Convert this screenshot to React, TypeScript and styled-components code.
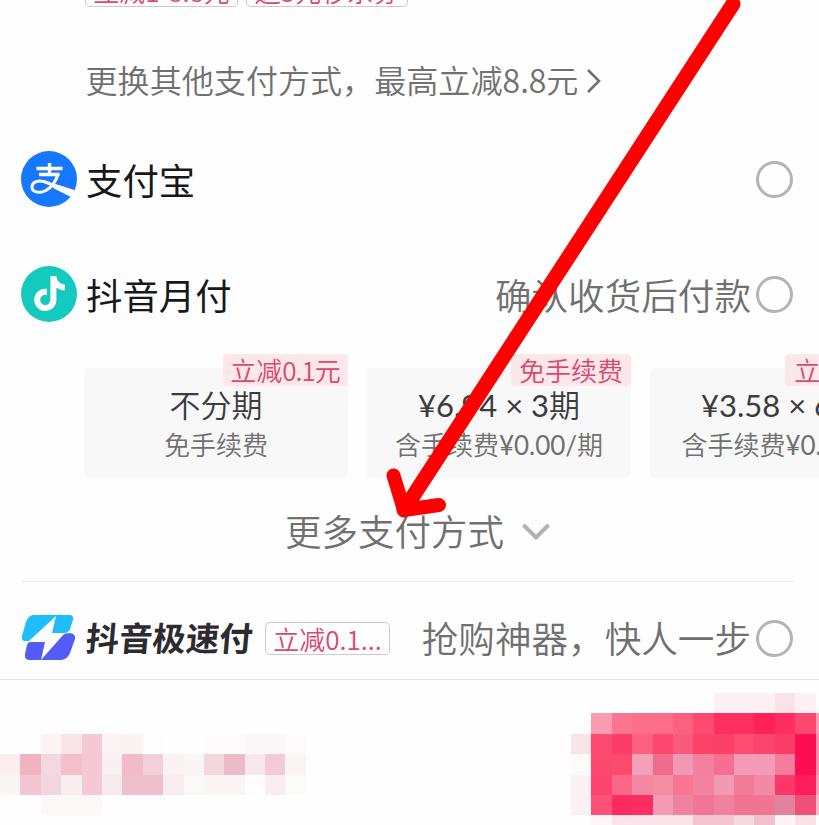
import React from 'react';
import styled, { createGlobalStyle } from 'styled-components';
import { FaTiktok } from 'react-icons/fa6';

const GlobalStyle = createGlobalStyle`
  * { box-sizing: border-box; }
  html, body { margin: 0; padding: 0; overflow: hidden; background: #fefefe; }
`;

const Screen = styled.main`
  position: relative;
  display: flex;
  flex-direction: column;
  width: 819px;
  height: 825px;
  overflow: hidden;
  background: #fefefe;
  color: #17181c;
  font-family: 'Noto Sans CJK SC', sans-serif;
  font-weight: 350;
  white-space: nowrap;
`;

const CouponStrip = styled.div`
  display: flex;
  align-items: flex-end;
  gap: 8px;
  height: 7px;
  padding-left: 85px;
`;

const Tag = styled.span<{ $width: number }>`
  flex: none;
  display: flex;
  align-items: center;
  justify-content: center;
  width: ${(p) => p.$width}px;
  height: 33px;
  border: 1px solid #d8c4c9;
  border-radius: 5px;
  color: #d9486f;
  font-size: 26px;
  line-height: 31px;
`;

const SwitchMethod = styled.div`
  display: flex;
  align-items: center;
  gap: 8px;
  height: 115px;
  padding: 32px 0 0 85.5px;
  color: #707070;
  font-size: 32.1px;
`;

const SwitchLabel = styled.span`
  margin-top: -4px;
  line-height: 48px;
`;

const MethodRow = styled.div<{ $height: number; $top?: number }>`
  display: flex;
  align-items: center;
  height: ${(p) => p.$height}px;
  padding: ${(p) => p.$top ?? 0}px 26px 0 21px;
`;

const Name = styled.span`
  margin: -2px 0 0 9px;
  font-size: 36.4px;
  font-weight: 400;
  line-height: 54px;
`;

const FastName = styled.span`
  margin: -2px 0 0 10px;
  color: #2b2b30;
  font-size: 33.4px;
  font-weight: 700;
  line-height: 50px;
  transform: skewX(-5deg);
`;

const Hint = styled.span`
  margin-left: auto;
  color: #707070;
  font-size: 36.6px;
  line-height: 54px;
`;

const Radio = styled.span<{ $push?: boolean }>`
  flex: none;
  width: 37px;
  height: 37px;
  margin-left: ${(p) => (p.$push ? 'auto' : '5px')};
  border: 3px solid #b4b4b4;
  border-radius: 50%;
`;

const Disc = styled.span<{ $color: string }>`
  flex: none;
  display: flex;
  align-items: center;
  justify-content: center;
  width: 56px;
  height: 56px;
  margin-top: -2px;
  border-radius: 50%;
  background: ${(p) => p.$color};
  color: #fff;
`;

const Plans = styled.div`
  display: flex;
  gap: 19px;
  height: 126px;
  padding: 16px 0 0 84px;
`;

const Plan = styled.div`
  position: relative;
  flex: none;
  display: flex;
  flex-direction: column;
  align-items: center;
  width: 264px;
  height: 110px;
  padding-top: 15px;
  border-radius: 5px;
  background: #f8f8f8;
`;

const PlanBadge = styled.span<{ $width: number }>`
  position: absolute;
  top: -14px;
  right: 0;
  width: ${(p) => p.$width}px;
  height: 32px;
  border-radius: 4px;
  background: #fce8eb;
  color: #d9486f;
  font-size: 26px;
  line-height: 32px;
  text-align: center;
`;

const Amount = styled.span`
  letter-spacing: -1px;
`;

const Latin = styled.span`
  font-family: Lato, sans-serif;
  font-weight: 400;
  line-height: 1;
`;

const PlanTitle = styled.span`
  color: #3c3c40;
  font-size: 31px;
  line-height: 42px;
`;

const PlanNote = styled.span<{ $indent: number }>`
  padding-left: ${(p) => p.$indent}px;
  color: #707070;
  font-size: 26px;
  line-height: 37px;
`;

const MoreRow = styled.div`
  display: flex;
  align-items: center;
  gap: 18px;
  height: 103px;
  padding: 4px 0 0 285px;
  color: #707070;
  font-size: 36.5px;
`;

const MoreLabel = styled.span`
  margin-top: -1px;
  line-height: 54px;
`;

const Divider = styled.hr`
  flex: none;
  width: 771px;
  height: 1px;
  margin: 0 0 0 22px;
  border: 0;
  background: #e9e9e9;
`;

const FastTag = styled(Tag)`
  margin-left: 12px;
`;

const Footer = styled.footer`
  flex: none;
  height: 146px;
  padding-top: 13px;
  border-top: 1px solid #e4e4e4;
  overflow: hidden;
`;

const Mosaic = styled.div`
  display: grid;
  grid-template-columns: repeat(41, 20.4px);
  grid-auto-rows: 20.4px;
`;

const Pixel = styled.span<{ $color: string }>`
  background: ${(p) => p.$color};
`;

const Pointer = styled.svg`
  position: absolute;
  inset: 0;
  pointer-events: none;
`;

/* Each run is [first column, colours of consecutive cells]. */
type Run = [number, string];
const mosaicRows: Run[][] = [
  [[35, 'fbf0f3 fbf0f3 fbf0f3 f7e3e8 fcf2f5']],
  [[29, 'fa9cb0 fc7590 fc6e89 fc6e89 fd5f80 fe4a6f ff3060 ff3060 ff2058 ff2e62 fe476e fa9fb6']],
  [
    [2, 'fbf3f4 f8e3e7 f5c9d3 fcf4f4 fcf2f2 fefdfd fefefe fefefe fcfafa fcfafa faf7f8 faf7f8 fcfafa'],
    [28, 'f8e3e7 fd4a70 fc3e67 fb607f ff4670 fa5a7b fc4269 fc4169 fc4c70 fb456c fc3e67 ff0d52 fa8eac'],
  ],
  [
    [0, 'faeeef f1b3c0 f3d9df f3c0cb f5c9d3 faf0f1 f0bcc9 f3cfd9 faf2f3 fbf6f6 f3d7df edbbc8 f8e8eb f2cbd6 faf4f5'],
    [28, 'fefafa fc486d fb4a6e f3a0b8 f06c8e f099b4 f3809d f56f92 f49bb8 f49bb8 f77b9b ff0d52 fa8eac'],
  ],
  [
    [0, 'fbf6f6 f3c6d1 f3d5dc f9edef f5c9d3 f8e9ec f0bfcc f0bfcc f8edf0 fbf8f8 fbf5f6 fbf5f6 fefcfc f9edf0 fdfafa'],
    [28, 'fbf1f3 fc456c fb6787 f288a4 f58ca3 f87693 f3829f f19ab2 f27b9a f28aa6 fc386a ff1c5a fa9fb6'],
  ],
  [
    [2, 'fdf8f8 fdf8f8 fdf8f8'],
    [28, 'fbf1f3 fd5178 ff2a60 ff2e62 f29db4 ee839e f17596 f0829d f07593 f07593 e2829f f04f78 f8b9c9'],
  ],
  [[29, 'fdf5f7 fae4ea fae4ea fae4ea fae4ea f5c4d2 f5c4d2 f6d8e1 f2bfce fdf4f5 f8e2e8']],
];

const cells = mosaicRows.flatMap((runs) => {
  const row: string[] = Array(41).fill('transparent');
  runs.forEach(([start, colors]) =>
    colors.split(' ').forEach((c, i) => {
      row[start + i] = `#${c}`;
    }),
  );
  return row;
});

/* Sets figures and symbols in the Latin face, leaving Chinese as it is. */
const Mixed = ({ text }: { text: string }) => (
  <>
    {text
      .split(/([\u0020-\u00ff]+)/)
      .filter(Boolean)
      .map((part, i) => (part.charCodeAt(0) < 256 ? <Latin key={i}>{part}</Latin> : part))}
  </>
);

const plans = [
  { title: '不分期', note: '免手续费', badge: <>立减<Amount>0.1</Amount>元</>, width: 125, indent: 0 },
  { title: '¥6.94 × 3期', note: '含手续费¥0.00/期', badge: '免手续费', width: 120, indent: 0 },
  { title: '¥3.58 × 6期', note: '含手续费¥0.00/期', badge: <>立减<Amount>0.1</Amount>元</>, width: 129, indent: 7 },
];

const AlipayIcon = () => (
  <svg width="56" height="56" viewBox="0 0 56 56">
    <g fill="none" stroke="#fff">
      <path d="M28.500 12V22M15.500 17.500H41.500M18 23.500H38.500" strokeWidth="3.400" />
      <path d="M37 23C35 30 31 36 25 39.500C18 43 10.500 41 11 35.500C12 29 20 29 27 32C36 36 42 39 50 42" strokeWidth="3" />
      <path d="M33 32.500L55 39.500L51 46.500L32 37Z" fill="#fff" stroke="none" />
    </g>
  </svg>
);

const FastPayIcon = () => (
  <svg width="55" height="46" viewBox="0 0 55 46">
    <path d="M12 0H48Q53 0 52 5L49 14Q48 17 44 18H31L35 1L8 26H4Q0 26 1 21L5 7Q7 1 12 0Z" fill="#20bdfb" />
    <path d="M9 27H24L20 45L42 20Q44 18 49 18Q55 19 54 24L49 38Q46 45 40 45H9Q3 45 4 39L6 30Q7 27 9 27Z" fill="#535cf6" />
  </svg>
);

export default function App() {
  return (
    <Screen>
      <GlobalStyle />
      <CouponStrip>
        <Tag $width={153}>立减1-8.8元</Tag>
        <Tag $width={162}>送3元秒杀券</Tag>
      </CouponStrip>
      <SwitchMethod>
        <SwitchLabel>更换其他支付方式，最高立减8.8元</SwitchLabel>
        <svg width="16" height="24" viewBox="0 0 16 24" fill="none" stroke="#707070" strokeWidth="2.6">
          <path d="M2 1L13 12L2 23" />
        </svg>
      </SwitchMethod>
      <MethodRow $height={115}>
        <Disc $color="#1677ff">
          <AlipayIcon />
        </Disc>
        <Name>支付宝</Name>
        <Radio $push />
      </MethodRow>
      <MethodRow $height={115}>
        <Disc $color="#14c9bd">
          <FaTiktok size={35} />
        </Disc>
        <Name>抖音月付</Name>
        <Hint>确认收货后付款</Hint>
        <Radio />
      </MethodRow>
      <Plans>
        {plans.map((p) => (
          <Plan key={p.title}>
            <PlanBadge $width={p.width}>{p.badge}</PlanBadge>
            <PlanTitle>
              <Mixed text={p.title} />
            </PlanTitle>
            <PlanNote $indent={p.indent}>
              <Mixed text={p.note} />
            </PlanNote>
          </Plan>
        ))}
      </Plans>
      <MoreRow>
        <MoreLabel>更多支付方式</MoreLabel>
        <svg width="28" height="18" viewBox="0 0 28 18" fill="none" stroke="#b2b2b2" strokeWidth="4">
          <path d="M1.500 2L14 14.500L26.500 2" />
        </svg>
      </MoreRow>
      <Divider />
      <MethodRow $height={97} $top={15}>
        <FastPayIcon />
        <FastName>抖音极速付</FastName>
        <FastTag $width={125}>立减0.1...</FastTag>
        <Hint>抢购神器，快人一步</Hint>
        <Radio />
      </MethodRow>
      <Footer>
        <Mosaic>
          {cells.map((c, i) => (
            <Pixel key={i} $color={c} />
          ))}
        </Mosaic>
      </Footer>
      <Pointer width="819" height="825" viewBox="0 0 819 825" fill="none" stroke="#fe0000" strokeLinecap="round" strokeLinejoin="round">
        <path d="M733 4L404 510" strokeWidth="15" />
        <path d="M393.500 475.500L404 510L439 505" strokeWidth="14" />
      </Pointer>
    </Screen>
  );
}
